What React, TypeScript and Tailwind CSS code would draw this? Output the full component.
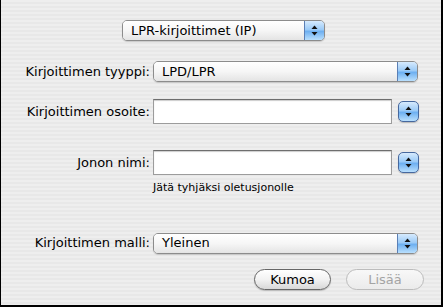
import React from "react";

const font = { fontFamily: '"DejaVu Sans", "Liberation Sans", sans-serif' };

function Arrows() {
  return (
    <svg width="7" height="11" viewBox="0 0 7 11">
      <path d="M3.5 0.5 L6.5 4 L0.5 4 Z" fill="#111" />
      <path d="M3.5 10.5 L6.5 7 L0.5 7 Z" fill="#111" />
    </svg>
  );
}

function Popup({ label, width }: { label: string; width: string }) {
  return (
    <div
      className={`flex h-[21px] ${width} overflow-hidden rounded-[5px] border border-[#8c8c8c] shadow-[0_1px_1px_rgba(0,0,0,0.15)]`}
    >
      <div className="flex flex-1 items-center bg-gradient-to-b from-white via-[#f6f6f6] to-[#e4e4e4] pl-[8px] text-[13px] text-black">
        {label}
      </div>
      <div className="flex w-[20px] items-center justify-center border-l border-[#5b7fb5] bg-[linear-gradient(to_bottom,#d6eafd_0%,#9ccbf7_45%,#6eb0f1_55%,#b9dffd_100%)]">
        <Arrows />
      </div>
    </div>
  );
}

function Stepper() {
  return (
    <div className="flex h-[21px] w-[21px] items-center justify-center rounded-[5px] border border-[#46689e] bg-[linear-gradient(to_bottom,#d6eafd_0%,#9ccbf7_45%,#6eb0f1_55%,#b9dffd_100%)] shadow-[0_1px_1px_rgba(0,0,0,0.2)]">
      <Arrows />
    </div>
  );
}

function TextInput() {
  return (
    <div className="h-[25px] w-[239px] border border-[#9c9c9c] border-t-[#6e6e6e] bg-white shadow-[inset_0_1px_1px_rgba(0,0,0,0.2)]" />
  );
}

function Row({ label, children, className }: { label: string; children: React.ReactNode; className?: string }) {
  return (
    <div className={`flex items-center ${className ?? ""}`}>
      <div className="w-[152px] pr-[3px] text-right text-[13px] text-black">{label}</div>
      {children}
    </div>
  );
}

export default function App() {
  return (
    <div
      style={font}
      className="flex h-[307px] w-[443px] flex-col border-l border-r-2 border-b-2 border-black bg-[repeating-linear-gradient(to_bottom,#eeeeee_0px,#eeeeee_2px,#e8e8e8_2px,#e8e8e8_4px)]"
    >
      <div className="ml-[121px] mt-[20px]">
        <Popup label="LPR-kirjoittimet (IP)" width="w-[203px]" />
      </div>

      <Row label="Kirjoittimen tyyppi:" className="mt-[20px]">
        <Popup label="LPD/LPR" width="w-[265px]" />
      </Row>

      <Row label="Kirjoittimen osoite:" className="mt-[17px]">
        <TextInput />
        <div className="ml-[6px]">
          <Stepper />
        </div>
      </Row>

      <Row label="Jonon nimi:" className="mt-[26px]">
        <TextInput />
        <div className="ml-[6px]">
          <Stepper />
        </div>
      </Row>

      <div className="ml-[152px] mt-[5px] text-[11px] text-black">Jätä tyhjäksi oletusjonolle</div>

      <Row label="Kirjoittimen malli:" className="mt-[36px]">
        <Popup label="Yleinen" width="w-[265px]" />
      </Row>

      <div className="ml-[253px] mt-[15px] flex gap-[15px]">
        <button className="h-[21px] w-[77px] rounded-full border border-[#666] bg-gradient-to-b from-white via-[#f2f2f2] to-[#d8d8d8] text-[13px] text-black shadow-[0_1px_1px_rgba(0,0,0,0.2)]">
          Kumoa
        </button>
        <button className="h-[21px] w-[78px] rounded-full border border-[#bcbcbc] bg-gradient-to-b from-[#f8f8f8] to-[#ebebeb] text-[13px] text-[#a4a4a4]">
          Lisää
        </button>
      </div>
    </div>
  );
}
